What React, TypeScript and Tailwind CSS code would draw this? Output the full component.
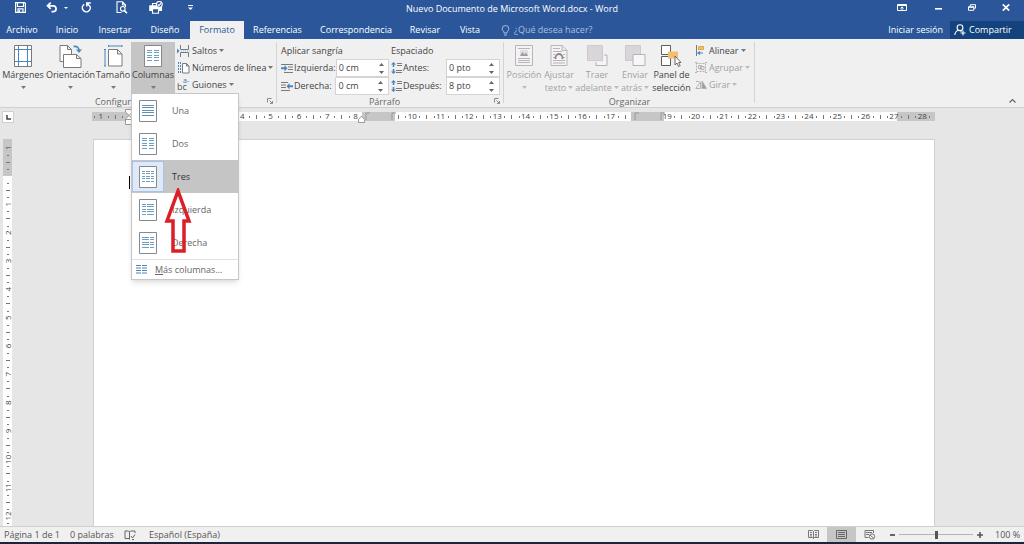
import { ReactNode } from "react";
import clsx from "clsx";

const INK = "#7a7a7a";
const BLUE = "#4a86bd";

const Caret = ({ className }: { className?: string }) => (
  <svg width="5" height="3" viewBox="0 0 5 3" className={clsx("shrink-0", className)}>
    <path d="M0 0h5L2.5 3z" fill="currentColor" />
  </svg>
);

/* ---------- title bar ---------- */

const QuickButton = ({ label, className, children }: { label: string; className?: string; children: ReactNode }) => (
  <button aria-label={label} className={clsx("flex h-4 items-center justify-center", className)}>
    {children}
  </button>
);

const TitleBar = () => (
  <header className="relative flex h-4 items-center justify-between text-white">
    <div className="flex h-[15px] items-center self-start pl-3">
      <QuickButton label="Guardar" className="w-4">
        <svg width="11" height="11" viewBox="0 0 11 11" fill="none" stroke="white" strokeWidth="1.2">
          <path d="M.6.6h9l.8.8v9H.6zM2.5.8v3.7h6V.8M3 10.2V6.8h5v3.4M4.5 8v2" />
        </svg>
      </QuickButton>
      <QuickButton label="Deshacer" className="ml-4 w-4">
        <svg width="12" height="11" viewBox="0 0 12 11" fill="none" stroke="white" strokeWidth="1.7">
          <path d="M1.5 3.8h5.7a2.9 2.9 0 0 1 0 5.8H5.5M4.7.7L1.5 3.8l3.2 3.1" />
        </svg>
      </QuickButton>
      <QuickButton label="Opciones de deshacer" className="w-3">
        <svg width="4" height="2" viewBox="0 0 4 2">
          <path d="M0 0h4L2 2z" fill="white" />
        </svg>
      </QuickButton>
      <QuickButton label="Repetir" className="ml-[6px] w-4">
        <svg width="11" height="11" viewBox="0 0 11 11" fill="none" stroke="white" strokeWidth="1.5">
          <path d="M3.3 2.3A4 4 0 1 0 8.900 4M5.800 4.600V1H9.800M5.800 1.200L8.700 4" />
        </svg>
      </QuickButton>
      <QuickButton label="Vista previa" className="ml-5 w-4">
        <svg width="12" height="13" viewBox="0 0 12 13" fill="none" stroke="white" strokeWidth="1.1">
          <path d="M5.5 11.5H1V.8h5.5L9.5 4v2M6.5.8V4h3" />
          <circle cx="6.8" cy="7.8" r="2.3" />
          <path d="M8.4 9.6l2.6 2.6" strokeWidth="1.6" />
        </svg>
      </QuickButton>
      <QuickButton label="Impresión rápida" className="ml-4 w-5">
        <svg width="14" height="13" viewBox="0 0 14 13" fill="none" stroke="white" strokeWidth="1.1">
          <path d="M3.5 5V2.5h3.6M3 9.5H1V5h7" />
          <path d="M1 5h11.5v4.5H1z" fill="white" />
          <path d="M3.5 7.6h6v4.6h-6z" fill="#2b579a" />
          <circle cx="10.3" cy="3.4" r="2.9" fill="#2b579a" />
          <path d="M8.8 3.4l1.2 1.2 2-2.4" />
        </svg>
      </QuickButton>
      <QuickButton label="Personalizar barra" className="ml-4 w-4">
        <svg width="5" height="5" viewBox="0 0 5 5" fill="white">
          <path d="M0 0h5v1H0zM0 2.4h5L2.5 5z" />
        </svg>
      </QuickButton>
    </div>
    <h1 className="absolute inset-x-0 top-[3px] text-center text-[9px] leading-3">
      Nuevo Documento de Microsoft Word.docx - Word
    </h1>
    <div className="flex h-[15px] items-center gap-5 self-start pr-[10px]">
      <QuickButton label="Opciones de la cinta" className="w-4">
        <svg width="10" height="7" viewBox="0 0 10 7" fill="none" stroke="white">
          <path d="M.5.5h9v6h-9zM.5 1.5h9M5 6V3M3.4 4.4L5 2.900l1.600 1.500" />
        </svg>
      </QuickButton>
      <QuickButton label="Minimizar" className="w-4">
        <svg width="7" height="7" viewBox="0 0 7 7">
          <path d="M0 4h7v1.600H0z" fill="white" />
        </svg>
      </QuickButton>
      <QuickButton label="Restaurar" className="w-3">
        <svg width="8" height="7" viewBox="0 0 8 7" fill="none" stroke="white">
          <path d="M2.300 2V.7h5.200v3.500H6M.5 2.700h5.300v3.600H.5zM.5 3.300h5.300" />
        </svg>
      </QuickButton>
      <QuickButton label="Cerrar" className="w-4">
        <svg width="8" height="7" viewBox="0 0 8 7">
          <path d="M.8.4l6.400 6.200M7.200.4L.8 6.600" stroke="white" strokeWidth="1.7" />
        </svg>
      </QuickButton>
    </div>
  </header>
);

/* ---------- tabs ---------- */

const tabs = [
  { name: "Archivo", width: "w-[44px]" },
  { name: "Inicio", width: "w-[46px]" },
  { name: "Insertar", width: "w-[50px]" },
  { name: "Diseño", width: "w-[50px]" },
  { name: "Formato", width: "w-[54px]" },
  { name: "Referencias", width: "w-[67px]" },
  { name: "Correspondencia", width: "w-[90px]" },
  { name: "Revisar", width: "w-[48px]" },
  { name: "Vista", width: "w-[42px]" },
];

const TabBar = () => (
  <nav className="mt-[5px] flex h-[18px] items-stretch text-[9px] text-white">
    {tabs.map((tab) => (
      <button
        key={tab.name}
        className={clsx("shrink-0 text-center", tab.width, tab.name === "Formato" && "bg-[#f0f0f0] text-[#2b579a]")}
      >
        {tab.name}
      </button>
    ))}
    <label className="ml-[10px] flex flex-1 items-center gap-1 text-[#a9bfdf]">
      <svg width="9" height="11" viewBox="0 0 9 11" fill="none" stroke="currentColor">
        <path d="M3 8V6.8C1.8 6 1.2 5 1.2 3.8a3.3 3.3 0 0 1 6.6 0C7.8 5 7.2 6 6 6.8V8zM3 10h3" />
      </svg>
      <input
        aria-label="Buscar"
        placeholder="¿Qué desea hacer?"
        className="w-24 bg-transparent text-[9px] outline-none placeholder:text-[#a9bfdf]"
      />
    </label>
    <button className="pr-[7px]">Iniciar sesión</button>
    <button className="flex w-[74px] items-center gap-[3px] bg-[#14427c] pl-1">
      <svg width="12" height="12" viewBox="0 0 12 12" fill="none" stroke="white" strokeWidth="1.1">
        <circle cx="6" cy="3.700" r="2.900" />
        <path d="M4.500 6.200C2.200 6.900 1 8.600.8 11M6.500 6.800l1 .8M9 6.500v5M6.500 9h5" />
      </svg>
      Compartir
    </button>
  </nav>
);

/* ---------- ribbon icons ---------- */

const sheet = "M.5.5h17v21H.5z";

const MarginsIcon = () => (
  <svg width="18" height="22" viewBox="0 0 18 22" fill="white" stroke={INK}>
    <path d={sheet} />
    <path d="M4.5 1v20M13.5 1v20M1 4.5h16M1 16.5h16" stroke={BLUE} />
  </svg>
);

const OrientationIcon = () => (
  <svg width="23" height="23" viewBox="0 0 23 23" fill="white" stroke={INK}>
    <path d="M1 .5h7.5l4 4v12H1zM8.5.5v4h4" />
    <path d="M4.5 9.5h13l4.5 4v9H4.5zM17.5 9.5v4H22" />
    <path d="M14.5 1.500c3.500-.5 5.500 1 5.500 4" fill="none" stroke={BLUE} strokeWidth="1.6" />
    <path d="M17 4.500h6L20 8z" fill={BLUE} stroke="none" />
  </svg>
);

const SizeIcon = () => (
  <svg width="19" height="22" viewBox="0 0 19 22" fill="white" stroke={INK}>
    <path d="M4.500 4.500h9l4.500 4.500v12H4.500zM13.500 4.500V9H18" />
    <path d="M4.500 1h13.500M4.500 0v2M18 0v2M1 4.500V21M0 4.500h2M0 21h2" stroke={BLUE} />
  </svg>
);

// Line runs per kind: [start, end] pairs inside the 18px wide sheet
const columnRuns: Record<string, number[][]> = {
  Una: [[3, 15]],
  Dos: [[3, 8], [10, 15]],
  Tres: [[3, 6], [7, 11], [12, 15]],
  Izquierda: [[3, 7], [8, 15]],
  Derecha: [[3, 10], [11, 15]],
};

const ColumnsIcon = ({ kind }: { kind: string }) => (
  <svg width="18" height="22" viewBox="0 0 18 22">
    <path d={sheet} fill="white" stroke="#85898c" />
    {[5, 7, 10, 12, 15].map((y) =>
      columnRuns[kind].map(([a, b]) => (
        <path key={`${y}-${a}`} d={`M${a} ${y + 0.5}H${b}`} stroke={kind === "Una" ? "#5c93b4" : "#6c9fc0"} />
      ))
    )}
  </svg>
);

const BreaksIcon = () => (
  <svg width="13" height="12" viewBox="0 0 13 12" fill="none" stroke={INK}>
    <path d="M3.500 0v4.500h8V0M3.500 12V7.500h8V12" />
    <path d="M0 3.500L2.500 6 0 8.500z" fill={BLUE} stroke="none" />
    <path d="M4 6h9" stroke="#9dbbd8" strokeDasharray="1 1" />
  </svg>
);

const LineNumbersIcon = () => (
  <svg width="13" height="12" viewBox="0 0 13 12" fill="white" stroke={INK}>
    <path d="M5.500 1.500h4l2.500 2.500v7H5.500zM9.500 1.500V4H12" />
    <path d="M1.500 0v12M3.500 0v12" stroke={BLUE} strokeDasharray="2 1" />
  </svg>
);

const HyphenIcon = () => (
  <span aria-hidden="true" className="flex w-[13px] shrink-0 flex-col text-left text-[#555]">
    <span className="pl-[6px] text-[7px] leading-[5px] text-[#3f6fa0]">a-</span>
    <span className="text-[9px] leading-[8px]">bc</span>
  </span>
);

const IndentIcon = ({ right }: { right?: boolean }) => (
  <svg width="12" height="11" viewBox="0 0 12 11" fill="none" stroke={INK}>
    <path d={right ? "M0 1.500h7M0 4h5M0 6.500h5M0 9.500h9" : "M0 1.500h12M7 4h5M7 6.500h5M3 9.500h9"} />
    {right ? (
      <path d="M5.500 5.200L8.500 2v2.200H12v2H8.500v2.300z" fill={BLUE} stroke="none" />
    ) : (
      <path d="M6.500 5.200L3.500 2v2.200H0v2h3.500v2.300z" fill={BLUE} stroke="none" />
    )}
  </svg>
);

const SpacingIcon = () => (
  <svg width="11" height="12" viewBox="0 0 11 12" fill="none" stroke={INK}>
    <path d="M6 1.500h5M6 3.500h5M5 8.500h6M5 10.500h6" />
    <path d="M2.500 0L0 2.500h1.700V5h1.600V2.500H5zM2.500 12L0 9.500h1.700V7h1.600v2.500H5z" fill={BLUE} stroke="none" />
  </svg>
);

const PositionIcon = () => (
  <svg width="18" height="21" viewBox="0 0 18 21" fill="none" stroke="#b9b5b9">
    <path d="M.5.5h17v20H.5z" fill="#f4f2f4" />
    <path d="M3 3.500h12M3 13.500h12M3 15.500h12M3 17.500h12" />
    <path d="M5 5h8v6H5z" fill="#e2dfe2" stroke="none" />
    <path d="M5 11l2.500-4 2 2.500L11 7.500l2 3.500z" fill="#a09ca0" stroke="none" />
  </svg>
);

const WrapIcon = () => (
  <svg width="18" height="21" viewBox="0 0 18 21" fill="none" stroke="#b9b5b9">
    <path d="M1 .5h11L17 5.500v15H1zM12 .5v5h5" fill="#f4f2f4" />
    <path d="M3 3.500h7M3 6.500h9M3 9.500h2M13 9.500h2M3 12.500h2M13 12.500h2M3 15.500h12M3 18h12" />
    <path d="M5.500 14v-1.500a3.500 3.500 0 0 1 7 0V14" stroke="#8c888c" strokeWidth="1.8" />
  </svg>
);

const ForwardIcon = () => (
  <svg width="21" height="21" viewBox="0 0 21 21" stroke="#b5b1b5">
    <path d="M9 10h11v10.500H9z" fill="#f6f4f6" />
    <path d="M0 0h17v17H0z" fill="#f0f0f0" stroke="none" />
    <path d="M.5.500h15v15H.5z" fill="#d9d5d9" stroke="#cdc9cd" />
  </svg>
);

const BackwardIcon = () => (
  <svg width="21" height="21" viewBox="0 0 21 21" stroke="#b5b1b5">
    <path d="M.5.500h15v15H.5z" fill="#d9d5d9" stroke="#cdc9cd" />
    <path d="M8 9.500h12v11H8z" fill="#f8f6f8" />
  </svg>
);

const SelectionIcon = () => (
  <svg width="21" height="22" viewBox="0 0 21 22" stroke="#5c5c5c">
    <path d="M.5.500h9v9h-9zM.5 11.500h9v9h-9z" fill="white" />
    <path d="M7 6.500h10v7H7z" fill="#f2c06b" stroke="none" />
    <path d="M14 11v9l2-2 1.500 3.500 1.700-.8-1.500-3.200H20z" fill="white" strokeWidth=".9" />
  </svg>
);

const AlignIcon = () => (
  <svg width="12" height="12" viewBox="0 0 12 12">
    <path d="M1.500 0v11" stroke={INK} />
    <path d="M3.500 1.500h5v3h-5z" fill="#f2c06b" stroke="#dba850" />
    <path d="M3 8h5M5 6.500L3 8l2 1.500" fill="none" stroke={BLUE} strokeWidth="1.2" />
  </svg>
);

const GroupIcon = () => (
  <svg width="12" height="11" viewBox="0 0 12 11" fill="none" stroke="#b5b1b5">
    <path d="M1.500 1.500h9v8h-9z" strokeDasharray="2 1" />
    <path d="M3.500 3.500h3v3h-3zM5.500 4.500h3.500v3H5.500z" />
    <path d="M0 .500h2M10 .500h2M0 10.500h2M10 10.500h2" />
  </svg>
);

const RotateIcon = () => (
  <svg width="12" height="11" viewBox="0 0 12 11" fill="none" stroke="#b5b1b5">
    <path d="M.8 9.500L5.500 3v6.500z" />
    <path d="M7 2v7.500h4.500z" fill="#9c989c" />
    <path d="M1 2.500h3.500" />
  </svg>
);

/* ---------- ribbon ---------- */

type BigButtonProps = {
  icon: ReactNode;
  lines: string[];
  width: string;
  caret?: boolean;
  disabled?: boolean;
  active?: boolean;
};

const BigButton = ({ icon, lines, width, caret = true, disabled, active }: BigButtonProps) => (
  <button
    disabled={disabled}
    className={clsx(
      "flex h-[53px] shrink-0 flex-col items-center pt-[3px] leading-3",
      width,
      disabled ? "text-[#a3a0a3]" : "text-[#444]",
      active && "bg-[#c5c5c5]"
    )}
  >
    <span className="flex h-6 items-start">{icon}</span>
    <span className="whitespace-nowrap">{lines[0]}</span>
    <span className="flex h-[13px] items-center gap-[2px] whitespace-nowrap">
      {lines[1]}
      {caret && <Caret className={disabled ? "text-[#bdbabd]" : "text-[#777]"} />}
    </span>
  </button>
);

const SmallButton = ({ icon, label, disabled }: { icon: ReactNode; label: string; disabled?: boolean }) => (
  <button
    disabled={disabled}
    className={clsx("flex h-[17px] items-center gap-[2px] whitespace-nowrap", disabled ? "text-[#a3a0a3]" : "text-[#444]")}
  >
    {icon}
    {label}
    <Caret className={disabled ? "text-[#bdbabd]" : "text-[#777]"} />
  </button>
);

const Launcher = ({ label }: { label: string }) => (
  <button aria-label={label} className="absolute right-1 bottom-[3px]">
    <svg width="6" height="6" viewBox="0 0 6 6" fill="none" stroke="#8a8a8a">
      <path d="M.5 4.500V.5h4M2.500 2.500l3 3M5.500 3v2.500H3" />
    </svg>
  </button>
);

const Group = ({ title, width, launcher, children }: { title: string; width: string; launcher?: boolean; children: ReactNode }) => (
  <section className={clsx("relative flex shrink-0 flex-col pt-[3px]", width)}>
    <div className="flex h-[53px]">{children}</div>
    <h2 className={clsx("text-center leading-[14px] text-[#666]", launcher && "pr-3")}>{title}</h2>
    {launcher && <Launcher label={`Configuración de ${title}`} />}
    <span className="absolute top-[3px] right-0 bottom-1 w-px bg-[#d4d4d4]" />
  </section>
);

const Spinner = ({ id, label, value, icon }: { id: string; label: string; value: string; icon: ReactNode }) => (
  <div className="flex h-[18px] items-center">
    <label htmlFor={id} className="flex w-[55px] items-center gap-px whitespace-nowrap">
      {icon}
      {label}
    </label>
    <div className="flex h-[18px] w-[54px] items-center border border-[#d4d4d4] bg-white">
      <input id={id} defaultValue={value} className="w-[42px] pl-[2px] text-[9px] outline-none" />
      <div className="flex flex-col gap-[5px] text-[#666]">
        <button aria-label={`Aumentar ${label}`}>
          <Caret className="rotate-180" />
        </button>
        <button aria-label={`Reducir ${label}`}>
          <Caret />
        </button>
      </div>
    </div>
  </div>
);

const menuItems = ["Una", "Dos", "Tres", "Izquierda", "Derecha"];

const ColumnsMenu = () => (
  <div role="menu" className="absolute top-[51px] left-0 z-10 w-[108px] border border-[#c6c6c6] bg-white text-[#666] shadow-md">
    {menuItems.map((item) => {
      const selected = item === "Tres";
      return (
        <button
          key={item}
          role="menuitem"
          className={clsx("flex h-[33px] w-full items-center gap-2 text-left", selected && "bg-[#c5c5c5] text-[#333]")}
        >
          <span
            className={clsx(
              "flex h-[31px] w-8 items-center justify-center border",
              selected ? "border-[#a9c3e6] bg-[#dfe9f7]" : "border-transparent"
            )}
          >
            <ColumnsIcon kind={item} />
          </span>
          {item}
        </button>
      );
    })}
    <button role="menuitem" className="flex h-5 w-full items-center gap-2 border-t border-[#e1e1e1] pl-1">
      <svg width="11" height="9" viewBox="0 0 11 9" fill="none" stroke={BLUE}>
        <path d="M0 .500h5M6 .500h5M0 3h5M6 3h5M0 5.500h5M6 5.500h5M0 8h5M6 8h5" />
      </svg>
      <span>
        <u>M</u>ás columnas...
      </span>
    </button>
    <svg width="28" height="66" viewBox="0 0 28 66" fill="none" className="absolute top-[94px] left-8">
      <path d="M14 3L3 33h6v30h11V33h5z" stroke="#dc1f26" strokeWidth="3.5" />
    </svg>
  </div>
);

const Ribbon = () => (
  <div className="flex h-[69px] border-b border-[#d0d0d0] bg-[#f0f0f0] text-[9px] text-[#444]">
    <Group title="Configurar página" width="w-[277px]" launcher>
      <BigButton icon={<MarginsIcon />} lines={["Márgenes"]} width="w-[46px]" />
      <BigButton icon={<OrientationIcon />} lines={["Orientación"]} width="w-[49px]" />
      <BigButton icon={<SizeIcon />} lines={["Tamaño"]} width="w-[36px]" />
      <div className="relative">
        <BigButton icon={<ColumnsIcon kind="Dos" />} lines={["Columnas"]} width="w-[44px]" active />
        <ColumnsMenu />
      </div>
      <div className="flex flex-col pl-[2px]">
        <SmallButton icon={<BreaksIcon />} label="Saltos" />
        <SmallButton icon={<LineNumbersIcon />} label="Números de línea" />
        <SmallButton icon={<HyphenIcon />} label="Guiones" />
      </div>
    </Group>
    <Group title="Párrafo" width="w-[227px]" launcher>
      <div className="w-[112px] pl-1">
        <h3 className="h-[17px] leading-[17px]">Aplicar sangría</h3>
        <Spinner id="izq" label="Izquierda:" value="0 cm" icon={<IndentIcon />} />
        <Spinner id="der" label="Derecha:" value="0 cm" icon={<IndentIcon right />} />
      </div>
      <div className="pl-[2px]">
        <h3 className="h-[17px] leading-[17px]">Espaciado</h3>
        <Spinner id="antes" label="Antes:" value="0 pto" icon={<SpacingIcon />} />
        <Spinner id="despues" label="Después:" value="8 pto" icon={<SpacingIcon />} />
      </div>
    </Group>
    <Group title="Organizar" width="w-[251px]">
      <BigButton icon={<PositionIcon />} lines={["Posición"]} width="w-[40px]" disabled />
      <BigButton icon={<WrapIcon />} lines={["Ajustar", "texto"]} width="w-[30px]" disabled />
      <BigButton icon={<ForwardIcon />} lines={["Traer", "adelante"]} width="w-[46px]" disabled />
      <BigButton icon={<BackwardIcon />} lines={["Enviar", "atrás"]} width="w-[30px]" disabled />
      <BigButton icon={<SelectionIcon />} lines={["Panel de", "selección"]} width="w-[43px]" caret={false} />
      <div className="flex flex-col pl-[2px]">
        <SmallButton icon={<AlignIcon />} label="Alinear" />
        <SmallButton icon={<GroupIcon />} label="Agrupar" disabled />
        <SmallButton icon={<RotateIcon />} label="Girar" disabled />
      </div>
    </Group>
    <button aria-label="Contraer la cinta" className="mt-auto mr-2 mb-1 ml-auto">
      <svg width="7" height="5" viewBox="0 0 7 5" fill="none" stroke="#666" strokeWidth="1.2">
        <path d="M.5 4.500l3-3 3 3" />
      </svg>
    </button>
  </div>
);

/* ---------- rulers ---------- */

const CM = 28.33;
const range = (from: number, to: number) => Array.from({ length: to - from + 1 }, (_, i) => from + i);

const HorizontalRuler = () => {
  const zero = 37;
  const inGap = (x: number) => (x > 268 && x < 304) || (x > 538 && x < 573);
  const quarters = range(-5, 113).map((q) => ({ q, x: zero + (q * CM) / 4 }));
  return (
    <svg width="843" height="16" viewBox="0 0 843 16" className="block shrink-0" fontFamily="Open Sans" fontSize="8" fill="#444">
      <path d="M0 3h843v9H0z" fill="white" />
      <path d="M0 3h37v9H0zM270 3h33v9h-33zM539 3h33v9h-33zM805 3h38v9h-38z" fill="#c6c6c6" />
      {quarters
        .filter(({ q, x }) => q !== 0 && !inGap(x))
        .map(({ q, x }) => {
          if (q % 4 === 0)
            return (
              <text key={q} x={x} y="10" textAnchor="middle">
                {Math.abs(q / 4)}
              </text>
            );
          return q % 2 === 0 ? (
            <rect key={q} x={Math.round(x)} y="6" width="1" height="4" fill="#777" />
          ) : (
            <rect key={q} x={Math.round(x)} y="7" width="1" height="2" fill="#777" />
          );
        })}
      <path d="M274 11V4h4M300 11V4h4M543 11V4h4M569 11V4h4" fill="none" stroke="#999" />
      <path d="M33.500.500h7V3L37 6.500 33.500 3zM33.500 10L37 6.500 40.500 10v5.500h-7zM33.500 10.500h7" fill="white" stroke="#999" />
      <path d="M266.500 13.500v-3L269.500 7l3 3.500v3z" fill="white" stroke="#999" />
    </svg>
  );
};

const VerticalRuler = () => {
  const zero = 37;
  return (
    <svg width="9" height="387" viewBox="0 0 9 387" className="block" fontFamily="Open Sans" fontSize="8" fill="#444">
      <path d="M0 0h9v387H0z" fill="white" />
      <path d="M0 0h9v37H0z" fill="#c6c6c6" />
      {range(-4, 49)
        .filter((q) => q !== 0)
        .map((q) => {
          const y = zero + (q * CM) / 4;
          if (q % 4 === 0)
            return (
              <text key={q} transform={`translate(8 ${y}) rotate(-90)`} textAnchor="middle">
                {Math.abs(q / 4)}
              </text>
            );
          return q % 2 === 0 ? (
            <rect key={q} x="3" y={Math.round(y)} width="4" height="1" fill="#777" />
          ) : (
            <rect key={q} x="4" y={Math.round(y)} width="2" height="1" fill="#777" />
          );
        })}
    </svg>
  );
};

const Workspace = () => (
  <main className="flex flex-1 flex-col bg-[#e6e6e6]">
    <div className="flex items-start pt-px">
      <button aria-label="Tabulación" className="mt-[2px] ml-[2px] flex h-[12px] w-[12px] items-center justify-center border border-[#d0d0d0] bg-white">
        <svg width="5" height="5" viewBox="0 0 5 5" fill="none" stroke="#444" strokeWidth="1.5">
          <path d="M1 0v4h4" />
        </svg>
      </button>
      <div className="ml-[78px]">
        <HorizontalRuler />
      </div>
    </div>
    <div className="mt-[14px] flex flex-1">
      <div className="w-[93px] shrink-0 pl-[3px]">
        <VerticalRuler />
      </div>
      <article className="mr-[89px] flex-1 border-x border-t border-[#d0d0d0] bg-white pt-9 pl-[35px]">
        <div className="h-[13px] w-px bg-black" />
      </article>
    </div>
  </main>
);

/* ---------- status bar ---------- */

const StatusBar = () => (
  <footer className="flex h-[18px] items-center border-t border-b-2 border-t-[#d0d0d0] border-b-[#1c2438] bg-[#f0f0f0] pl-1 text-[9px] text-[#555]">
    <span className="w-[66px]">Página 1 de 1</span>
    <span className="w-[54px]">0 palabras</span>
    <button aria-label="Revisión" className="w-[25px]">
      <svg width="12" height="10" viewBox="0 0 12 10" fill="none" stroke="#666">
        <path d="M5.500 8.500H1V1h3.500l1 1 1-1H11v2M5.500 2v7.500M7 6l1.500 2L11 4.500M8 9.500h2" />
      </svg>
    </button>
    <span>Español (España)</span>
    <div className="ml-auto flex h-full items-center">
      <button aria-label="Modo de lectura" className="flex w-7 justify-center">
        <svg width="11" height="9" viewBox="0 0 11 9" fill="none" stroke="#777">
          <path d="M.5.500h4l1 1 1-1h4v7h-4l-1 1-1-1h-4zM5.500 1.500v7M2 2.500h2M2 4.500h2M2 6h2M7 2.500h2M7 4.500h2M7 6h2" />
        </svg>
      </button>
      <button aria-label="Diseño de impresión" className="flex h-full w-[29px] items-center justify-center bg-[#c6c6c6]">
        <svg width="11" height="9" viewBox="0 0 11 9" fill="none" stroke="#666">
          <path d="M.5.500h10v8H.5zM2 2.500h7M2 4.500h7M2 6.500h7" />
        </svg>
      </button>
      <button aria-label="Diseño web" className="flex w-7 justify-center">
        <svg width="12" height="10" viewBox="0 0 12 10" fill="none" stroke="#777">
          <path d="M4.500 7.500H1V.5h8.500V3M2 2.500h6M2 4.500h3" />
          <circle cx="8" cy="6.500" r="2.700" />
          <path d="M6 5l4 3.500" />
        </svg>
      </button>
      <button aria-label="Alejar" className="ml-1 flex w-2 justify-center">
        <span className="h-[2px] w-[5px] bg-[#666]" />
      </button>
      <input
        type="range"
        aria-label="Zoom"
        defaultValue={50}
        className="mx-[3px] h-3 w-[74px] appearance-none bg-[linear-gradient(#b5b5b5,#b5b5b5)] bg-[length:100%_1px] bg-center bg-no-repeat [&::-webkit-slider-thumb]:h-2 [&::-webkit-slider-thumb]:w-[3px] [&::-webkit-slider-thumb]:appearance-none [&::-webkit-slider-thumb]:bg-[#555]"
      />
      <button aria-label="Acercar" className="flex w-2 justify-center">
        <svg width="6" height="6" viewBox="0 0 6 6" stroke="#555" strokeWidth="1.6">
          <path d="M3 0v6M0 3h6" />
        </svg>
      </button>
      <span className="w-10 pl-[11px] whitespace-nowrap">100 %</span>
    </div>
  </footer>
);

const App = () => (
  <div className="flex min-h-screen flex-col bg-[#2b579a] font-['Open_Sans','Noto_Sans',sans-serif]">
    <TitleBar />
    <TabBar />
    <Ribbon />
    <Workspace />
    <StatusBar />
  </div>
);

export default App;
